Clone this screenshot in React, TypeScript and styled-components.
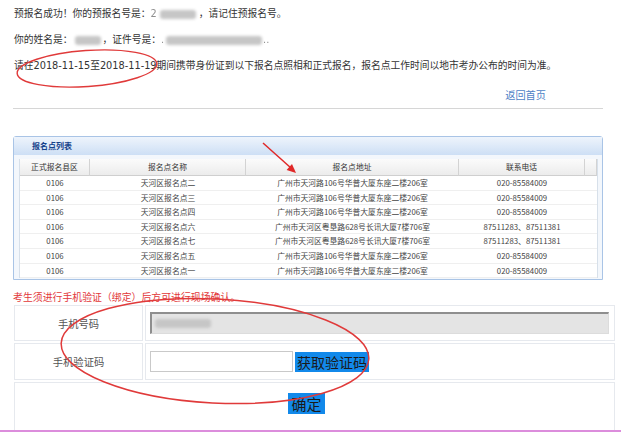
import React from "react";
import styled, { createGlobalStyle } from "styled-components";

const GlobalStyle = createGlobalStyle`
  html, body { margin: 0; padding: 0; background: #fff; }
  body { font-family: "Noto Sans CJK SC", "Noto Sans", sans-serif; color: #333; }
  * { box-sizing: border-box; }
`;

const Page = styled.div`
  position: relative;
  width: 621px;
  height: 432px;
  overflow: hidden;
  border-bottom: 2px solid #dc8ddc;
`;

const Notice = styled.div`
  padding: 1px 0 0 14px;
  font-family: "DejaVu Sans", "Noto Sans CJK SC", sans-serif;
  font-size: 9.75px;
  line-height: 26px;
  color: #333;
  p {
    margin: 0;
    white-space: nowrap;
  }
`;

const Blur = styled.span<{ $w: number; $ml?: number; $mr?: number }>`
  display: inline-block;
  width: ${(p) => p.$w}px;
  height: 9px;
  margin: 0 ${(p) => p.$mr ?? 4}px 0 ${(p) => p.$ml ?? 4}px;
  vertical-align: middle;
  background: #c6c6c6;
  border-radius: 3px;
  filter: blur(1.6px);
`;

const Faint = styled.span`
  opacity: 0.55;
`;

const LinkRow = styled.div`
  margin: 0 18px 0 13px;
  padding-right: 57px;
  text-align: right;
  line-height: 26px;
  border-bottom: 1px solid #d6d6d6;
  a {
    font-size: 10.2px;
    color: #4d7fc6;
    text-decoration: none;
  }
`;

const Panel = styled.div`
  margin: 27px 18px 0 13px;
  border: 1px solid #a9c4e6;
  border-radius: 3px 3px 0 0;
  background: #f3f7fc;
`;

const PanelHeader = styled.div`
  height: 18px;
  padding-left: 18px;
  line-height: 18px;
  font-size: 8px;
  font-weight: bold;
  color: #15428b;
  background: linear-gradient(#eef4fc, #cddff5);
`;

const PanelBody = styled.div`
  padding: 4px 4px 1px 5px;
`;

const Grid = styled.div`
  display: grid;
  grid-template-columns: 70px 156px 213px 126px 1fr;
  background: #fff;
  border-left: 1px solid #d7e0ea;
  border-right: 1px solid #d7e0ea;
`;

const HeadCell = styled.div`
  height: 17px;
  line-height: 16px;
  text-align: center;
  font-size: 7.8px;
  color: #333;
  background: linear-gradient(#fbfbfb, #ececec);
  border-right: 1px solid #d3d3d3;
  border-bottom: 1px solid #cfcfcf;
  &:last-child {
    border-right: none;
  }
`;

const Cell = styled.div`
  height: 14.6px;
  line-height: 14px;
  text-align: center;
  white-space: nowrap;
  font-size: 7.8px;
  color: #444;
  border-bottom: 1px solid #efefef;
`;

const Warn = styled.div`
  margin: 10px 0 0 13px;
  font-size: 9.9px;
  line-height: 14px;
  color: #e2383a;
`;

const Form = styled.div`
  margin: 1px 6px 0 14px;
  display: grid;
  grid-template-columns: 129px 1fr;
  grid-template-rows: 36px 37px 50px;
  gap: 2px;
`;

const Label = styled.div`
  display: flex;
  align-items: center;
  justify-content: center;
  border: 1px solid #e6e9ee;
  font-size: 10.3px;
  color: #555;
`;

const Value = styled.div`
  display: flex;
  align-items: center;
  padding-left: 4px;
  border: 1px solid #e6e9ee;
`;

const Actions = styled.div`
  grid-column: 1 / -1;
  display: flex;
  align-items: center;
  justify-content: center;
  padding: 0 18px 8px 0;
  border: 1px solid #e6e9ee;
`;

const DisabledField = styled.div`
  width: 459px;
  height: 22px;
  display: flex;
  align-items: center;
  padding-left: 2px;
  background: #e4e4e4;
  border-top: 2px solid #8e8e8e;
  border-left: 2px solid #8e8e8e;
  border-right: 1px solid #dcdcdc;
  border-bottom: 1px solid #dcdcdc;
`;

const CodeInput = styled.input`
  width: 143px;
  height: 21px;
  border: 1px solid #c9c9c9;
  background: #fff;
  outline: none;
`;

const BlueButton = styled.button<{ $size: number; $pad: number }>`
  height: ${(p) => p.$size + 6}px;
  margin-left: 2px;
  padding: 0 ${(p) => p.$pad}px;
  border: none;
  border-radius: 0;
  background: #1289ea;
  color: #1a1a1a;
  font-family: "Noto Sans CJK SC", sans-serif;
  font-size: ${(p) => p.$size}px;
  line-height: 1;
`;

const Overlay = styled.svg`
  position: absolute;
  left: 0;
  top: 0;
  pointer-events: none;
`;

const rows = [
  ["0106", "天河区报名点二", "广州市天河路106号华普大厦东座二楼206室", "020-85584009"],
  ["0106", "天河区报名点三", "广州市天河路106号华普大厦东座二楼206室", "020-85584009"],
  ["0106", "天河区报名点四", "广州市天河路106号华普大厦东座二楼206室", "020-85584009"],
  ["0106", "天河区报名点六", "广州市天河区粤垦路628号长讯大厦7楼706室", "87511283、87511381"],
  ["0106", "天河区报名点七", "广州市天河区粤垦路628号长讯大厦7楼706室", "87511283、87511381"],
  ["0106", "天河区报名点五", "广州市天河路106号华普大厦东座二楼206室", "020-85584009"],
  ["0106", "天河区报名点一", "广州市天河路106号华普大厦东座二楼206室", "020-85584009"],
];

const heads = ["正式报名县区", "报名点名称", "报名点地址", "联系电话", ""];

export default function App() {
  return (
    <>
      <GlobalStyle />
      <Page>
        <Notice>
          <p>
            预报名成功！你的预报名号是：<Faint>2</Faint>
            <Blur $w={36} $ml={3} $mr={3} />，请记住预报名号。
          </p>
          <p>
            你的姓名是：<Blur $w={26} $ml={2} $mr={2} />，证件号是：<Faint>.</Faint>
            <Blur $w={96} $ml={2} $mr={1} />
            <Faint>..</Faint>
          </p>
          <p>请在2018-11-15至2018-11-19期间携带身份证到以下报名点照相和正式报名，报名点工作时间以地市考办公布的时间为准。</p>
        </Notice>
        <LinkRow>
          <a href="#">返回首页</a>
        </LinkRow>

        <Panel>
          <PanelHeader>报名点列表</PanelHeader>
          <PanelBody>
            <Grid>
              {heads.map((h, i) => (
                <HeadCell key={i}>{h}</HeadCell>
              ))}
              {rows.map((r, i) => (
                <React.Fragment key={i}>
                  {r.map((c, j) => (
                    <Cell key={j}>{c}</Cell>
                  ))}
                  <Cell />
                </React.Fragment>
              ))}
            </Grid>
          </PanelBody>
        </Panel>

        <Warn>考生须进行手机验证（绑定）后方可进行现场确认。</Warn>
        <Form>
          <Label>手机号码</Label>
          <Value>
            <DisabledField>
              <Blur $w={56} $ml={1} $mr={0} />
            </DisabledField>
          </Value>
          <Label>手机验证码</Label>
          <Value>
            <CodeInput />
            <BlueButton $size={14} $pad={2}>获取验证码</BlueButton>
          </Value>
          <Actions>
            <BlueButton $size={15} $pad={3}>确定</BlueButton>
          </Actions>
        </Form>

        <Overlay width="621" height="432" viewBox="0 0 621 432">
          <ellipse
            cx="87"
            cy="68.5"
            rx="70"
            ry="18"
            transform="rotate(-4 87 68.5)"
            fill="none"
            stroke="#e03a3a"
            strokeWidth="1.4"
          />
          <ellipse
            cx="215"
            cy="351"
            rx="154"
            ry="52"
            transform="rotate(3 215 351)"
            fill="none"
            stroke="#e03a3a"
            strokeWidth="1.5"
          />
          <line x1="263" y1="143" x2="291" y2="168" stroke="#e02828" strokeWidth="1.5" />
          <polygon points="296,173 286.6,170 292,164" fill="#e02828" />
        </Overlay>
      </Page>
    </>
  );
}
